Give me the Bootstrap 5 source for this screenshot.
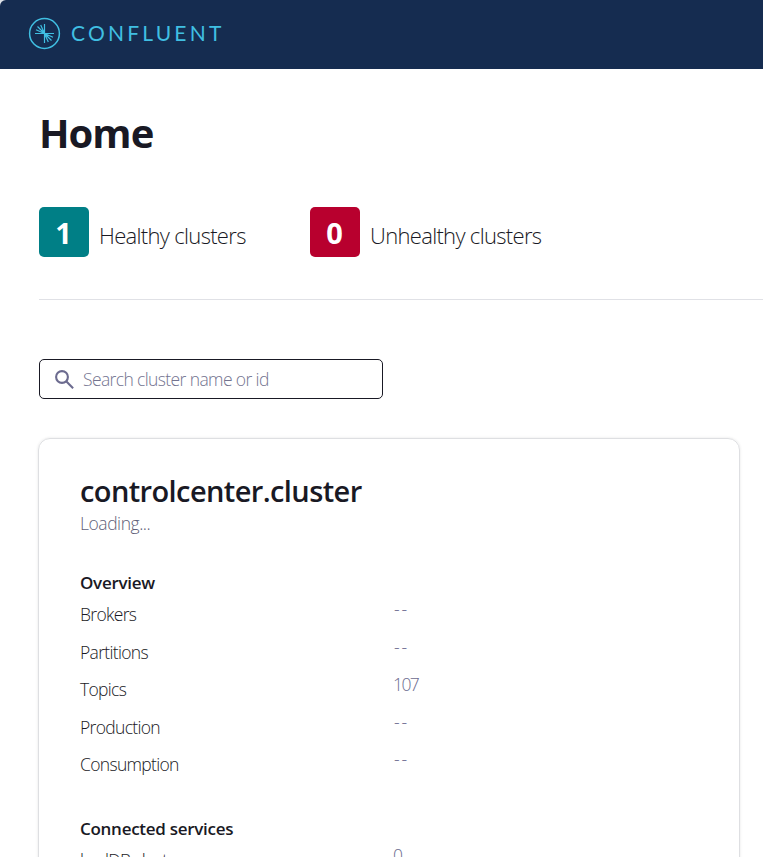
<!DOCTYPE html>
<html lang="en">
<head>
<meta charset="utf-8">
<meta name="viewport" content="width=device-width, initial-scale=1">
<title>Confluent Control Center</title>
<link href="https://cdn.jsdelivr.net/npm/bootstrap@5.3.0/dist/css/bootstrap.min.css" rel="stylesheet">
<style>
html,body{height:100%;overflow:hidden}
body{font-family:"Open Sans","Noto Sans",sans-serif;font-weight:300;color:#191924;background:#fff;white-space:nowrap}
.topbar{height:69px;background:#dfe3e8}
.topbar-fill{height:69px;background:#152c50;border-top-left-radius:6px;padding:0 0 2px 28px}
.word{font-family:Lato,sans-serif;font-weight:400;font-size:21px;letter-spacing:3.2px;color:#40bfe2;line-height:28px;margin:0 0 2px 10px}
.content{padding-left:39px}
.title{font-size:40px;font-weight:700;line-height:50px;margin:39px 0 0;letter-spacing:-1px}
.stats{margin-top:49px;height:93px;border-bottom:1px solid #e0e1e6}
.stat{width:271px;height:50px}
.tile{width:50px;height:50px;border-radius:5px;color:#fff;font-weight:700;font-size:29px;line-height:52px;padding-right:1px}
.tile-ok{background:#007f86}
.tile-bad{background:#b8002e}
.stat-name{font-size:22px;line-height:48px;padding-top:4px;margin-left:10px;letter-spacing:-.68px}
.search{width:344px;height:40px;margin-top:59px;border:1px solid #191924;border-radius:5px;padding-left:15px}
.search input{font-size:17.5px;font-weight:300;letter-spacing:-.62px;padding:0 0 0 8px;height:38px;color:#6c6b8f}
.search input::placeholder{color:#73738f;opacity:1}
.search input:focus{box-shadow:none}
.cluster{width:702px;height:560px;margin:39px 0 0 -1px;border:1px solid #dedfe2;border-radius:12px;box-shadow:0 0 3px rgba(0,0,0,.1);padding:31px 41px}
.cluster-name{font-size:29px;font-weight:600;line-height:42px;margin:0;letter-spacing:-.6px}
.status{font-size:17.5px;line-height:23px;color:#5f5f78;letter-spacing:-.45px}
.group-name{font-size:17px;font-weight:600;line-height:26px;margin:0;letter-spacing:-.28px}
.overview{margin-top:35px}
.services{margin-top:32px}
.metric{height:37.5px}
.metric dt{width:313px;font-weight:300;font-size:17.5px;line-height:37px;letter-spacing:-.68px}
.metric dd{margin:0;font-size:17.5px;line-height:27px;color:#6c6b8f;letter-spacing:-1.6px}
.metric .pending{letter-spacing:1.9px;line-height:26px;padding-left:1px}
</style>
</head>
<body>
<header class="topbar">
  <div class="topbar-fill d-flex align-items-center">
    <svg width="33" height="33" viewBox="0 0 33 33" fill="none" stroke="#40bfe2" stroke-width="1.2" aria-hidden="true">
      <circle cx="16.5" cy="16.5" r="14.9" stroke-width="1.5"/>
      <path d="M16.5 7v19M7 16.5h19M16.5 16.5 12.7 8M16.5 16.5 9.5 9.5M16.5 16.5 8 12.7M16.5 16.5 20.3 25M16.5 16.5 23.5 23.5M16.5 16.5 25 20.3"/>
    </svg>
    <span class="word">CONFLUENT</span>
  </div>
</header>
<main class="content">
  <h1 class="title">Home</h1>
  <section class="stats d-flex">
    <div class="stat d-flex"><div class="tile tile-ok text-center">1</div><div class="stat-name">Healthy clusters</div></div>
    <div class="stat d-flex"><div class="tile tile-bad text-center">0</div><div class="stat-name">Unhealthy clusters</div></div>
  </section>
  <div class="search d-flex align-items-center">
    <svg class="flex-shrink-0" width="20" height="20" viewBox="0 0 20 20" fill="none" stroke="#6c6b8f" stroke-width="2.1" aria-hidden="true"><circle cx="7" cy="8" r="5.9"/><path d="m11.2 12.2 6.9 7"/></svg>
    <input class="form-control border-0 bg-transparent" type="text" placeholder="Search cluster name or id" aria-label="Search">
  </div>
  <article class="cluster">
    <h2 class="cluster-name">controlcenter.cluster</h2>
    <div class="status">Loading...</div>
    <h3 class="group-name overview">Overview</h3>
    <dl class="mb-0">
      <div class="metric d-flex"><dt>Brokers</dt><dd class="pending">--</dd></div>
      <div class="metric d-flex"><dt>Partitions</dt><dd class="pending">--</dd></div>
      <div class="metric d-flex"><dt>Topics</dt><dd>107</dd></div>
      <div class="metric d-flex"><dt>Production</dt><dd class="pending">--</dd></div>
      <div class="metric d-flex"><dt>Consumption</dt><dd class="pending">--</dd></div>
    </dl>
    <h3 class="group-name services">Connected services</h3>
    <dl class="mb-0">
      <div class="metric d-flex"><dt>ksqlDB clusters</dt><dd>0</dd></div>
    </dl>
  </article>
</main>
<script src="https://cdn.jsdelivr.net/npm/bootstrap@5.3.0/dist/js/bootstrap.bundle.min.js"></script>
</body>
</html>
